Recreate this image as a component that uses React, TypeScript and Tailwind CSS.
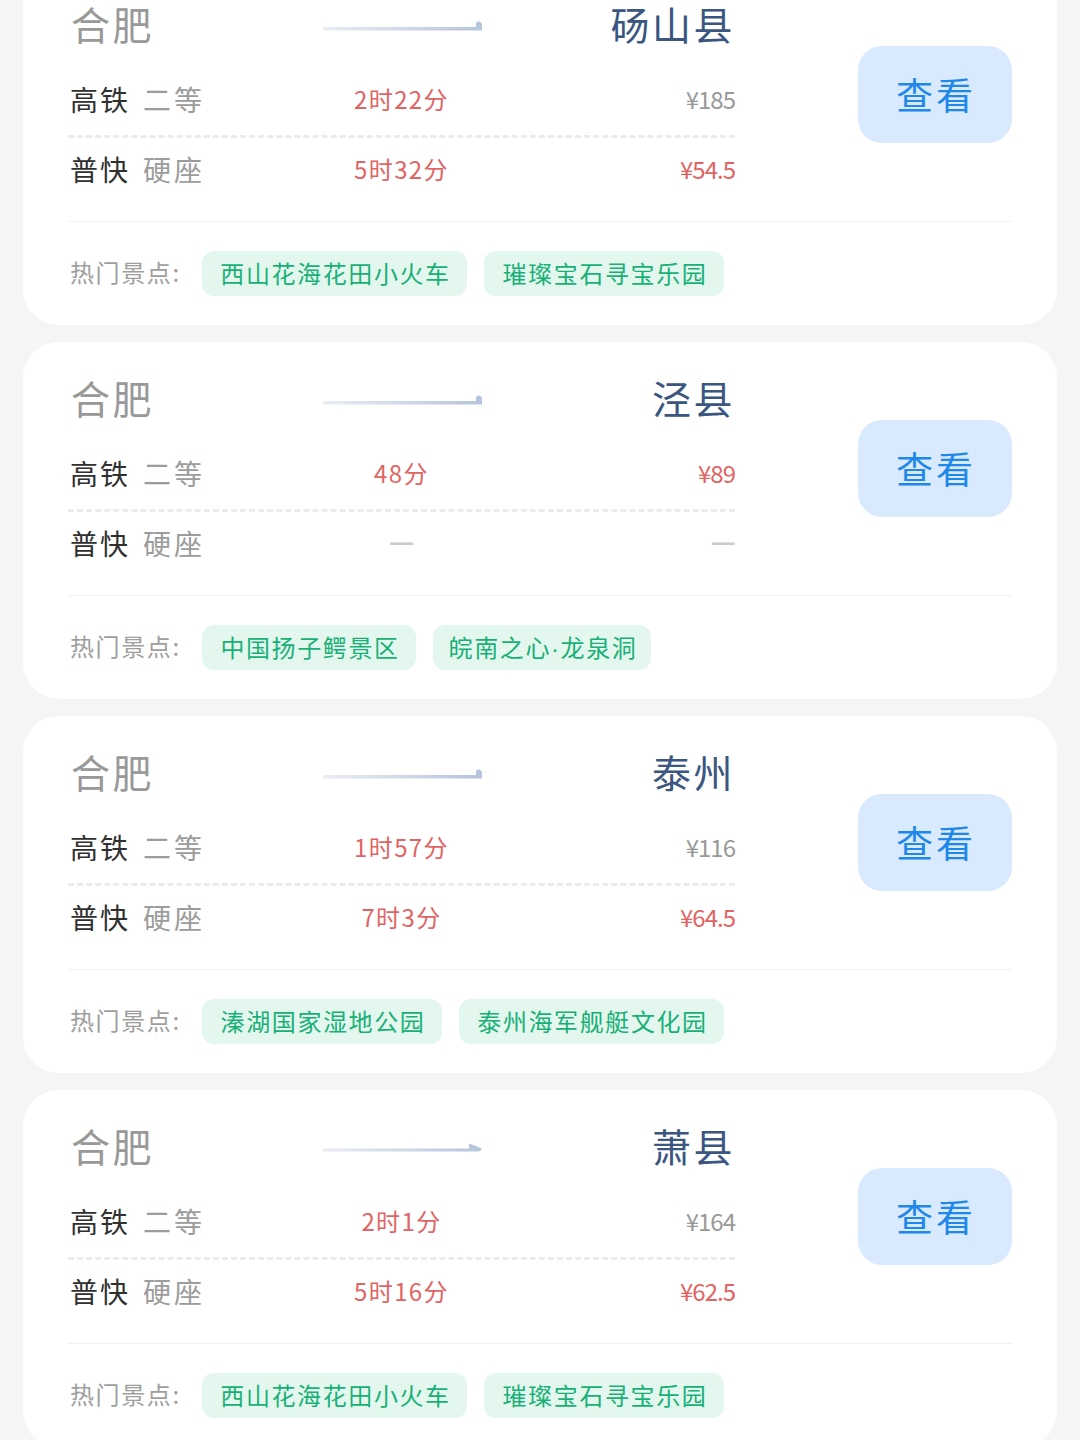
type Fare = {
  duration?: string;
  price?: string;
  expensive?: boolean;
};

type Trip = {
  from: string;
  to: string;
  fast: Fare;
  slow: Fare;
  spots: { name: string; width: string }[];
  pointed?: boolean;
};

const trips: Trip[] = [
  {
    from: "合肥",
    to: "砀山县",
    fast: { duration: "2时22分", price: "¥185", expensive: true },
    slow: { duration: "5时32分", price: "¥54.5" },
    spots: [
      { name: "西山花海花田小火车", width: "w-[265px]" },
      { name: "璀璨宝石寻宝乐园", width: "w-[240px]" },
    ],
  },
  {
    from: "合肥",
    to: "泾县",
    fast: { duration: "48分", price: "¥89" },
    slow: {},
    spots: [
      { name: "中国扬子鳄景区", width: "w-[214px]" },
      { name: "皖南之心·龙泉洞", width: "w-[218px]" },
    ],
  },
  {
    from: "合肥",
    to: "泰州",
    fast: { duration: "1时57分", price: "¥116", expensive: true },
    slow: { duration: "7时3分", price: "¥64.5" },
    spots: [
      { name: "溱湖国家湿地公园", width: "w-[240px]" },
      { name: "泰州海军舰艇文化园", width: "w-[265px]" },
    ],
  },
  {
    from: "合肥",
    to: "萧县",
    fast: { duration: "2时1分", price: "¥164", expensive: true },
    slow: { duration: "5时16分", price: "¥62.5" },
    spots: [
      { name: "西山花海花田小火车", width: "w-[265px]" },
      { name: "璀璨宝石寻宝乐园", width: "w-[240px]" },
    ],
    pointed: true,
  },
];

export default function App() {
  return (
    <div className="h-[1440px] w-[1080px] overflow-hidden bg-[#f5f5f5] font-['Noto_Sans_CJK_SC',sans-serif]">
      <main className="-mt-[32px] flex flex-col gap-[17px] px-[23px]">
        {trips.map((t) => (
          <TripCard key={t.to} trip={t} />
        ))}
      </main>
    </div>
  );
}

function TripCard({ trip }: { trip: Trip }) {
  return (
    <section className="h-[357px] shrink-0 rounded-[36px] bg-white px-[45px] pt-[20px]">
      <div className="flex h-[233px] justify-between">
        <div className="w-[667px]">
          <div className="grid h-[77px] grid-cols-[1fr_160px_1fr] items-center text-[39px] leading-none tracking-[2.5px]">
            <span className="pb-[7px] pl-[3px] text-[#999999]">{trip.from}</span>
            <Arrow pointed={trip.pointed} />
            <span className="pb-[7px] text-right text-[#3b5680]">{trip.to}</span>
          </div>
          <div className="border-b-[3px] border-dashed border-[#e9ebef] pb-[1px]">
            <FareRow kind="高铁" seat="二等" fare={trip.fast} />
          </div>
          <div className="-mt-[3px]">
            <FareRow kind="普快" seat="硬座" fare={trip.slow} />
          </div>
        </div>
        <button className="mt-[58px] h-[97px] w-[154px] rounded-[24px] bg-[#d9eaff] pl-[2px] text-[37px] leading-none tracking-[3px] text-[#2088e9]">
          查看
        </button>
      </div>
      <div className="flex items-center border-t border-[#f0f3f4] pt-[29px]">
        <span className="w-[134px] shrink-0 pb-[4px] pl-[2px] text-[24px] leading-none tracking-[1.6px] whitespace-nowrap text-[#9e9e9e]">
          热门景点:
        </span>
        <div className="flex gap-[17px]">
          {trip.spots.map((s) => (
            <span
              key={s.name}
              className={`${s.width} flex h-[45px] items-center justify-center rounded-[12px] bg-[#e3f7ee] pt-[2px] pl-[2px] font-['Liberation_Sans','Noto_Sans_CJK_SC',sans-serif] text-[24px] leading-none tracking-[1.6px] whitespace-nowrap text-[#18b077]`}
            >
              {s.name}
            </span>
          ))}
        </div>
      </div>
    </section>
  );
}

function FareRow({ kind, seat, fare }: { kind: string; seat: string; fare: Fare }) {
  return (
    <div className="grid h-[69px] grid-cols-[1fr_160px_1fr] items-center text-[24px] leading-none">
      <div className="flex gap-[13px] pb-[2px] pl-[2px] text-[28px] tracking-[2px]">
        <span className="text-[#303030]">{kind}</span>
        <span className="tracking-[3px] text-[#9c9c9c]">{seat}</span>
      </div>
      {fare.duration ? (
        <span className="pb-[1px] text-center tracking-[1.4px] text-[#e16464]">{fare.duration}</span>
      ) : (
        <Dash className="text-center" />
      )}
      {fare.price ? (
        <span className={`pb-[1px] text-right tracking-[-1px] ${fare.expensive ? "text-[#999999]" : "text-[#e16464]"}`}>
          {fare.price}
        </span>
      ) : (
        <Dash className="-mr-[1px] text-right" />
      )}
    </div>
  );
}

function Dash({ className }: { className: string }) {
  return <span className={`${className} pb-[8px] text-[28px] font-bold text-[#cccccc]`}>—</span>;
}

function Arrow({ pointed }: { pointed?: boolean }) {
  const id = pointed ? "shaft-pointed" : "shaft";
  return (
    <svg width="160" height="16" viewBox="0 0 160 16" className="mt-[3px]">
      <defs>
        <linearGradient id={id} x1="0" x2="160" y1="0" y2="0" gradientUnits="userSpaceOnUse">
          <stop offset="0" stopColor="#e9edf4" />
          <stop offset="1" stopColor="#b5c4dc" />
        </linearGradient>
      </defs>
      {pointed ? (
        <path d="M1 6.500h146V1.500q4 1 12.500 5v1.500q-2 1.500-4 1.500H1z" fill={`url(#${id})`} />
      ) : (
        <path d="M1 7h153V4q0-2.500 2.500-2.500h1l2.500 2V10.500H1z" fill={`url(#${id})`} />
      )}
    </svg>
  );
}
